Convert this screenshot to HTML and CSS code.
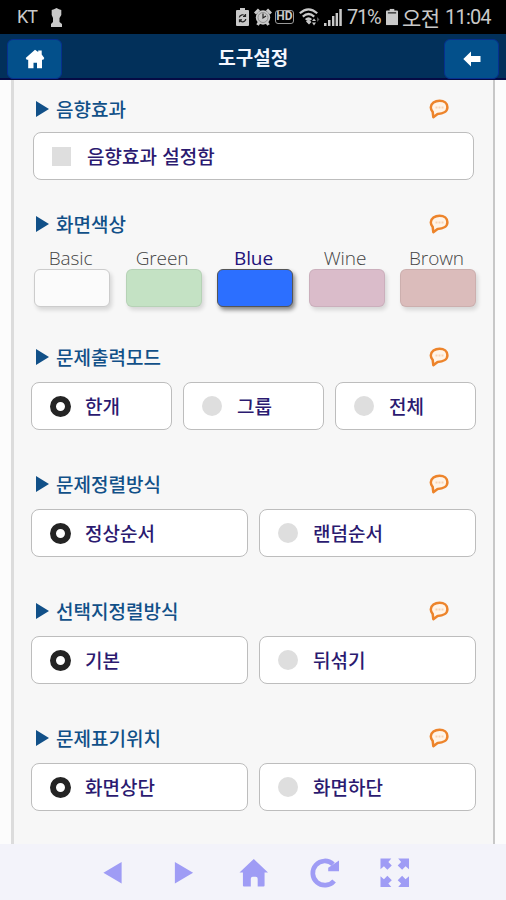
FILE: index.html
```html
<!DOCTYPE html>
<html lang="ko">
<head>
<meta charset="utf-8">
<title>도구설정</title>
<link rel="stylesheet" href="styles.css">
</head>
<body>
<svg class="defs" width="0" height="0">
  <symbol id="bubble" viewBox="0 0 20 20">
    <path d="M10.600 1.700C5.800 1.700 2 4.600 1.800 8.300c0 2 .6 3.500 1.900 4.700L4.300 18.200l4.300-3.300c5.900 0 9.800-2.700 9.800-6.700 0-3.900-3.300-6.500-7.800-6.500z" fill="#fff4e8" stroke="#ed842b" stroke-width="2.500" stroke-linejoin="round"/>
    <path d="M6.500 8.500h8" stroke="#f8d3b5" stroke-width="2.200" stroke-dasharray="2 1"/>
  </symbol>
  <symbol id="battery" viewBox="0 0 13 18">
    <path d="M4 0h5v2h3q1 0 1 1v14q0 1-1 1H1q-1 0-1-1V3q0-1 1-1h3z"/>
  </symbol>
</svg>

<header class="status">
  <span class="carrier">KT</span>
  <svg class="keyhole" width="11" height="19" viewBox="0 0 11 19"><path d="M5.500 0 8 1.300 10.300 2v5L8.500 10v4l2.500 2v3H0v-3l2-2v-4L.7 7V2L3 1.300z"/></svg>
  <svg class="recycle" width="13" height="18" viewBox="0 0 13 18"><use href="#battery"/><path d="M3.300 9.300a3.300 3.300 0 0 1 6-1M9.800 11a3.300 3.300 0 0 1-6.300.8M9.500 6v2.500H7M3.500 14.300v-2.500H6" fill="none" stroke="#222" stroke-width="1.200"/></svg>
  <svg class="alarm" width="18" height="18" viewBox="0 0 18 18"><circle cx="9" cy="9.500" r="7.200"/><path d="M1 5.500 5 1.500M17 5.500 13 1.500M3.500 17l2-3M14.500 17l-2-3" stroke="#c9c9c9" stroke-width="3"/><path d="M9 5.500V10l3-2" fill="none" stroke="#222" stroke-width="1.200"/><circle cx="9" cy="9.500" r="5" fill="none" stroke="#777" stroke-width=".7"/></svg>
  <span class="hd">HD</span>
  <svg class="wifi" width="21" height="18" viewBox="0 0 21 18"><g fill="none" stroke="#c9c9c9" stroke-width="2.200"><path d="M.8 5.300Q9.500-2.700 18.200 5.300M3.800 8.600Q9.500 3.400 15.200 8.600M6.700 11.800Q9.500 9.200 12.300 11.800"/></g><path d="M9.500 11l3 3-2.500 2.500-3-3zM13 13l2-2.500 2 2.500zM13 14.500h4l-2 3z"/><path d="M18 9l2.500 2.500L18 14z" fill="#555"/></svg>
  <svg class="signal" width="18" height="17" viewBox="0 0 18 17"><path d="M0 14h2.500v3H0zM4 11h2.500v6H4zM8 7h2.400v10H8zM11.600 4H14v13h-2.400zM15.300 0h2.500v17h-2.500z"/></svg>
  <span class="percent">71%</span>
  <svg class="charge" width="12" height="18" viewBox="0 0 13 18"><use href="#battery"/><path d="M2 4.500h9" stroke="#333" stroke-width="1.500"/></svg>
  <span class="ampm">오전</span>
  <span class="time">11:04</span>
</header>

<div class="titlebar">
  <button class="tbtn"><svg width="20" height="20" viewBox="0 0 20 20"><path d="M10 .8 13.200 3V1.500h3.500v4L19.300 9l-1 1.800h-1.300V19.300H12v-5.500H8.500v5.500H3.200v-8.500H1.700L.7 9z"/></svg></button>
  <h1>도구설정</h1>
  <button class="tbtn"><svg width="18" height="16" viewBox="0 0 18 16"><path d="M.3 8 8 .5V5h9.500v6H8v4.500z"/></svg></button>
</div>

<main>
  <div class="panel">
    <section class="sound">
      <h2><i></i><span>음향효과</span><svg><use href="#bubble"/></svg></h2>
      <div class="row single"><label class="opt"><b class="check"></b>음향효과 설정함</label></div>
    </section>
    <section class="colors">
      <h2><i></i><span>화면색상</span><svg><use href="#bubble"/></svg></h2>
      <div class="swatches">
        <div class="swatch basic"><span>Basic</span><b></b></div>
        <div class="swatch green"><span>Green</span><b></b></div>
        <div class="swatch blue"><span>Blue</span><b></b></div>
        <div class="swatch wine"><span>Wine</span><b></b></div>
        <div class="swatch brown"><span>Brown</span><b></b></div>
      </div>
    </section>
    <section>
      <h2><i></i><span>문제출력모드</span><svg><use href="#bubble"/></svg></h2>
      <div class="row three"><label class="opt"><b class="radio on"></b>한개</label><label class="opt"><b class="radio"></b>그룹</label><label class="opt"><b class="radio"></b>전체</label></div>
    </section>
    <section>
      <h2><i></i><span>문제정렬방식</span><svg><use href="#bubble"/></svg></h2>
      <div class="row"><label class="opt"><b class="radio on"></b>정상순서</label><label class="opt"><b class="radio"></b>랜덤순서</label></div>
    </section>
    <section>
      <h2><i></i><span>선택지정렬방식</span><svg><use href="#bubble"/></svg></h2>
      <div class="row"><label class="opt"><b class="radio on"></b>기본</label><label class="opt"><b class="radio"></b>뒤섞기</label></div>
    </section>
    <section>
      <h2><i></i><span>문제표기위치</span><svg><use href="#bubble"/></svg></h2>
      <div class="row"><label class="opt"><b class="radio on"></b>화면상단</label><label class="opt"><b class="radio"></b>화면하단</label></div>
    </section>
  </div>
</main>

<nav>
  <svg viewBox="0 0 30 30"><path d="M5.500 15 24 4v22z"/></svg>
  <svg viewBox="0 0 30 30"><path d="M24.500 15 6 4v22z"/></svg>
  <svg viewBox="0 0 30 30"><path d="M15 1 29.500 14.800H26V28q0 1-1 1h-6v-8q0-2-2-2h-3q-2 0-2 2v8H5q-1 0-1-1V14.800H.5z"/></svg>
  <svg viewBox="0 0 30 30"><path d="M24.500 23.300A12.300 12.300 0 1 1 23.500 6.300" fill="none" stroke="#9f9cf5" stroke-width="4.800"/><path d="M29.500 2.500V13.500H18.500V10z"/></svg>
  <svg viewBox="0 0 30 30"><path id="corner" d="M.5.500h11L8.500 4l3.500 3.500L7.500 12 4 8.500l-3.500 3z"/><use href="#corner" transform="rotate(90 15 15)"/><use href="#corner" transform="rotate(180 15 15)"/><use href="#corner" transform="rotate(270 15 15)"/></svg>
</nav>
</body>
</html>
```

FILE: styles.css
```css
* { box-sizing: border-box; }
body {
  margin: 0;
  width: 506px;
  height: 900px;
  display: flex;
  flex-direction: column;
  overflow: hidden;
  background: #fcfcfc;
  font-family: "Noto Sans CJK KR", sans-serif;
}
.defs { position: absolute; }
svg { flex: none; }

.status {
  height: 34px;
  background: #000;
  color: #c9c9c9;
  fill: #c9c9c9;
  display: flex;
  align-items: center;
  font: 20px/36px Roboto, sans-serif;
  white-space: nowrap;
}
.carrier { width: 34px; margin-left: 17px; font-size: 18px; letter-spacing: -1px; }
.recycle { margin-left: 174px; }
.alarm { margin-left: 5px; }
.hd {
  width: 19px; height: 14px;
  margin-left: 3px;
  border: 1.500px solid #999;
  border-radius: 3px;
  font: bold 12px/11px Roboto, sans-serif;
  text-align: center;
}
.wifi { margin-left: 5px; }
.signal { margin-left: 4px; }
.percent { width: 34px; margin-left: 5px; letter-spacing: -1.200px; }
.charge { margin-left: 5px; }
.ampm { width: 38px; margin-left: 4px; font-family: "Noto Sans CJK KR", sans-serif; font-size: 21px; letter-spacing: -0.500px; }
.time { margin-left: 5px; font-size: 20px; letter-spacing: -0.800px; }

.titlebar {
  height: 46px;
  padding: 5px 6.500px 0 7px;
  background: #02305a;
  border-bottom: 2px solid #050b45;
  display: flex;
  justify-content: space-between;
}
.tbtn {
  width: 55px; height: 40px;
  padding: 0;
  border: 1.500px solid #06308e;
  border-radius: 6px;
  background: #03508b;
  fill: #fff;
  display: grid;
  place-items: center;
}
h1 { margin: 0; font-size: 19px; line-height: 36px; font-weight: 700; color: #f5f7ff; }

main { height: 764px; padding: 0 11px; }
.panel {
  height: 100%;
  padding-top: 16px;
  background: #f7f7f7;
  border-left: 3px solid #dcdcdc;
  border-right: 2px solid #c8c8c8;
}
section { height: 127px; }
.sound { height: 115px; }
.colors { height: 133px; }
h2 {
  margin: 0;
  height: 26px;
  padding: 0 44px 0 22px;
  display: flex;
  align-items: center;
  font-size: 19px;
  line-height: 26px;
  font-weight: 500;
  color: #115088;
}
h2 i { border-left: 13px solid #115088; border-top: 8px solid transparent; border-bottom: 8px solid transparent; }
h2 span { margin: 0 auto 0 7px; }
h2 svg { width: 20px; height: 20px; margin-top: -1px; }
.row { display: flex; gap: 11px; margin: 12px 17px 0; }
.single { margin: 10px 19px 0; }
.opt {
  flex: 1;
  height: 48px;
  padding-left: 18px;
  border: 1.500px solid #bdbdbd;
  border-radius: 8px;
  background: #fff;
  display: flex;
  align-items: center;
  font-size: 19px;
  line-height: 44px;
  font-weight: 500;
  color: #2b1a70;
}
.radio { width: 20px; height: 20px; margin-right: 15px; border-radius: 50%; background: #dedede; }
.on { background: #fff; border: 6.500px solid #242424; width: 21px; height: 21px; margin-right: 14px; }
.check { width: 19px; height: 19px; margin-right: 16px; background: #dedede; }

.swatches { display: flex; justify-content: space-between; margin: 10px 17px 0 20px; }
.swatch { width: 76px; text-align: center; font: 300 19px/22px "Open Sans", sans-serif; color: #444; }
.swatch span { display: block; margin-left: -3px; letter-spacing: -0.100px; }
.swatch b { display: block; height: 38px; border: 1px solid #0001; border-radius: 6px; box-shadow: 2px 3px 4px #0002; }
.basic b { background: #fbfbfb; border-color: #ccc; }
.green b { background: #c4e2c4; }
.blue b { background: #2c6fff; border-color: #555; box-shadow: 2px 3px 4px #0007; }
.blue span { color: #22127a; font-weight: 500; }
.wine b { background: #dabcca; }
.brown b { background: #dbbcbb; }

nav {
  height: 56px;
  background: #f3f3fa;
  display: flex;
  justify-content: center;
  gap: 41px;
  padding-top: 14px;
  padding-left: 2px;
  fill: #9f9cf5;
}
nav svg { width: 29.500px; height: 29.500px; }
```
